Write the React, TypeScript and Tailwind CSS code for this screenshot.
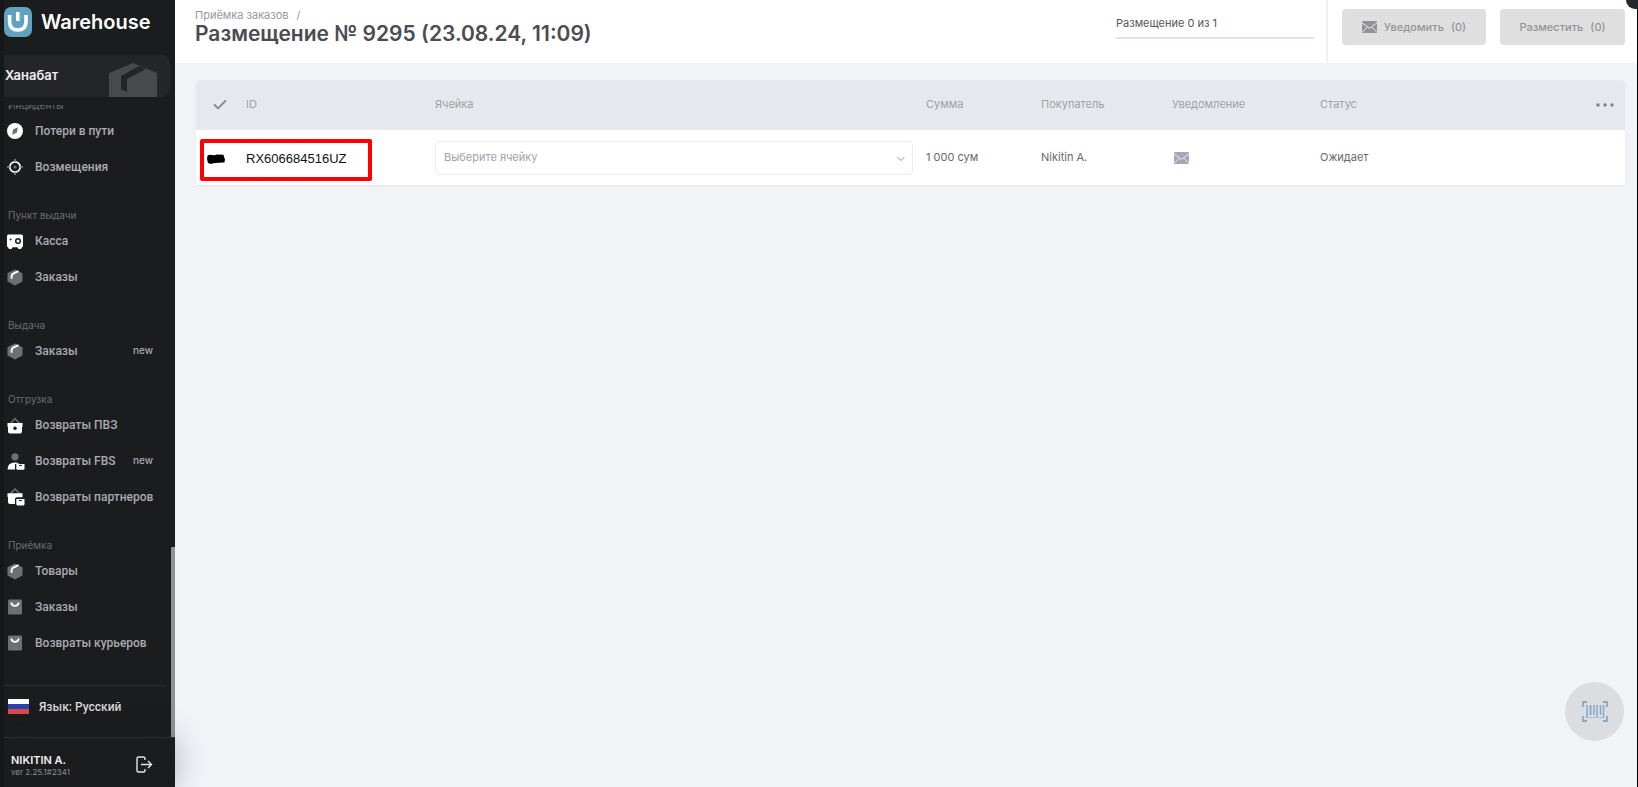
import React from "react";
import { Check, ChevronDown } from "lucide-react";

const BoxIcon = () => (
  <svg width="16" height="17" viewBox="0 0 16 17">
    <path d="M8 0.5L15.5 4.2V12.6L8 16.5L0.5 12.6V4.2Z" fill="#6f6f72" />
    <path d="M4.6 9.8V7.2Q4.6 5.4 6.2 4.6L11.5 2.2" fill="none" stroke="#fff" strokeWidth="1.9" />
  </svg>
);

const CompassIcon = () => (
  <svg width="16" height="16" viewBox="0 0 16 16">
    <circle cx="8" cy="8" r="8" fill="#fff" />
    <path d="M10.8 4.2L10 9.4L5.2 11.8L6 6.6Z" fill="#6f6f72" />
  </svg>
);

const TargetIcon = () => (
  <svg width="16" height="16" viewBox="0 0 16 16" fill="none">
    <circle cx="8" cy="8" r="5.2" stroke="#fff" strokeWidth="1.7" />
    <circle cx="8" cy="8" r="1.6" fill="#6f6f72" />
    <path d="M8 0V3M8 13V16M0 8H3M13 8H16" stroke="#8a8a8d" strokeWidth="1.6" />
  </svg>
);

const SafeIcon = () => (
  <svg width="16" height="15" viewBox="0 0 16 15">
    <path d="M1.5 0.5H14.5Q16 0.5 16 2V12Q16 13 15 13.2L14 15H11.5L10.5 13.3H5.5L4.5 15H2L1 13.2Q0 13 0 12V2Q0 0.5 1.5 0.5Z" fill="#fff" />
    <circle cx="11" cy="7" r="2.3" fill="#fff" stroke="#1b1c1d" strokeWidth="1.5" />
    <circle cx="3.6" cy="5.5" r="1" fill="#1b1c1d" />
  </svg>
);

const BasketIcon = () => (
  <svg width="16" height="17" viewBox="0 0 16 17">
    <path d="M3.5 6.5L8 1.5L12.5 6.5" fill="none" stroke="#6f6f72" strokeWidth="1.5" />
    <path d="M0.5 6H15.5V10H15V14.5Q15 16.5 13 16.5H3Q1 16.5 1 14.5V10H0.5Z" fill="#fff" />
    <circle cx="8" cy="11.2" r="1.7" fill="#1b1c1d" />
  </svg>
);

const PersonIcon = () => (
  <svg width="18" height="17" viewBox="0 0 18 17">
    <circle cx="8" cy="3.8" r="3.6" fill="#6f6f72" />
    <path d="M0.5 16.5Q0.5 9.5 8 9.5Q11 9.5 12.6 10.6L8 11V16.5Z" fill="#fff" />
    <path d="M9.3 11H17.5V15.5Q17.5 16.8 16.2 16.8H10.6Q9.3 16.8 9.3 15.5Z" fill="#fff" />
    <path d="M12 12.4H15" stroke="#1b1c1d" />
  </svg>
);

const PartnerIcon = () => (
  <svg width="18" height="18" viewBox="0 0 18 18">
    <path d="M3.5 5.5L8 1L12.5 5.5" fill="none" stroke="#6f6f72" strokeWidth="1.5" />
    <path d="M0.5 5.3H15.5V9.2H10Q8 9.2 8 11V16H3Q1 16 1 14V9H0.5Z" fill="#fff" />
    <path d="M9.3 11H17.5V16Q17.5 17.4 16.2 17.4H10.6Q9.3 17.4 9.3 16Z" fill="#fff" />
    <path d="M12 12.6H15" stroke="#1b1c1d" />
  </svg>
);

const BagIcon = () => (
  <svg width="16" height="16" viewBox="0 0 16 16">
    <rect x="1" y="0.5" width="14" height="15" rx="1.2" fill="#6f6f72" />
    <path d="M4.2 3.5Q4.8 6.8 8 6.8Q11.2 6.8 11.8 3.5" fill="none" stroke="#fff" strokeWidth="1.8" />
  </svg>
);

const MailIcon = () => (
  <svg width="15" height="12" viewBox="0 0 15 12">
    <rect width="15" height="12" rx="1" fill="currentColor" />
    <path d="M0 1.8L7.5 7.4L15 1.8M0.5 11L5.2 6.2M14.5 11L9.8 6.2" fill="none" stroke="#fff" strokeOpacity="0.8" />
  </svg>
);

const sections = [
  {
    title: "Инциденты",
    items: [
      { name: "Потери в пути", icon: <CompassIcon /> },
      { name: "Возмещения", icon: <TargetIcon /> },
    ],
  },
  {
    title: "Пункт выдачи",
    items: [
      { name: "Касса", icon: <SafeIcon /> },
      { name: "Заказы", icon: <BoxIcon /> },
    ],
  },
  {
    title: "Выдача",
    items: [{ name: "Заказы", icon: <BoxIcon />, isNew: true }],
  },
  {
    title: "Отгрузка",
    items: [
      { name: "Возвраты ПВЗ", icon: <BasketIcon /> },
      { name: "Возвраты FBS", icon: <PersonIcon />, isNew: true },
      { name: "Возвраты партнеров", icon: <PartnerIcon /> },
    ],
  },
  {
    title: "Приёмка",
    items: [
      { name: "Товары", icon: <BoxIcon /> },
      { name: "Заказы", icon: <BagIcon /> },
      { name: "Возвраты курьеров", icon: <BagIcon /> },
    ],
  },
];

function Sidebar() {
  return (
    <aside className="w-[175px] h-screen sticky top-0 shrink-0 flex flex-col bg-[#1b1c1d] border-l-4 border-[#161718]">
      <div className="flex items-center gap-[9px] h-[55px] pb-[11px]">
        <svg width="28" height="30" viewBox="0 0 28 30">
          <rect width="28" height="30" rx="7" fill="#5fa3bf" />
          <path d="M5.6 8V14.5Q5.6 23 13.8 23Q22 23 22 14.5V8" fill="none" stroke="#fff" strokeWidth="3.6" />
          <path d="M13.8 5V14" stroke="#fff" strokeWidth="3.6" />
        </svg>
        <span className="text-white text-xl font-semibold">Warehouse</span>
      </div>

      <div className="flex items-center justify-between h-[42px] mr-[5px] pl-px pr-[13px] rounded-r-lg bg-[#242528] shrink-0">
        <span className="text-[#eeeeef] text-[13px] font-semibold">Ханабат</span>
        <svg className="self-end" width="48" height="34" viewBox="0 0 48 34">
          <path d="M0 34V10L24 0L48 10V34Z" fill="#48494c" />
          <path d="M30 3L37 6L18 16V29L12 26V13Z" fill="#242528" />
        </svg>
      </div>

      <div className="flex-1 min-h-0 mt-2 flex overflow-hidden">
        <nav className="flex-1 min-w-0 pr-[5px]">
          <div className="-mt-[30px]">
            {sections.map((section) => (
              <div key={section.title} className="pt-[22px]">
                <h4 className="pl-1 text-[10px] leading-4 text-[#6c6d73]">{section.title}</h4>
                <ul>
                  {section.items.map((item) => (
                    <li key={item.name}>
                      <a
                        href="#"
                        className="flex items-center h-9 pl-[3px] pr-[13px] font-[Roboto,sans-serif] text-xs font-medium text-[#a9aab3]"
                      >
                        <span className="w-7 shrink-0">{item.icon}</span>
                        <span className="whitespace-nowrap">{item.name}</span>
                        {item.isNew && <span className="ml-auto font-[Inter,sans-serif] text-[10px]">new</span>}
                      </a>
                    </li>
                  ))}
                </ul>
              </div>
            ))}
          </div>
          <button className="flex items-center gap-[10px] w-full h-[42px] mt-6 pl-1 border-t border-[#2c2d30] font-[Roboto,sans-serif] text-xs font-medium text-[#d6d6da]">
            <svg width="21" height="15" viewBox="0 0 21 15">
              <rect width="21" height="5" fill="#fff" />
              <rect y="5" width="21" height="5" fill="#2745b0" />
              <rect y="10" width="21" height="5" fill="#dc4a48" />
            </svg>
            Язык: Русский
          </button>
        </nav>
        <div className="w-1 shrink-0 h-[190px] self-end bg-[#929295]"></div>
      </div>

      <div className="flex items-center justify-between h-[50px] pl-[7px] pr-[22px] pt-1 border-t border-[#2c2d30] bg-[#1b1c1d] shadow-[0_0_30px_rgba(24,32,70,0.3)] shrink-0">
        <div>
          <p className="text-[11px] leading-[14px] font-semibold text-[#f0f0f1]">NIKITIN A.</p>
          <p className="text-[8px] leading-[10px] text-[#8f9095]">ver 2.25.1#2341</p>
        </div>
        <button aria-label="Выйти">
          <svg width="17" height="17" viewBox="0 0 17 17" fill="none" stroke="#e4e4e6" strokeWidth="1.4">
            <path d="M9 4V2.5Q9 1 7.5 1H2.5Q1 1 1 2.5V14.5Q1 16 2.5 16H7.5Q9 16 9 14.5V13M5 8.5H15.5M12 5L15.5 8.5L12 12" />
          </svg>
        </button>
      </div>
    </aside>
  );
}

function Header() {
  return (
    <header className="flex h-[63px] bg-white">
      <div className="flex-1 pl-5 pt-2">
        <p className="text-[11px] leading-[14px] text-[#97989d]">
          <a href="#">Приёмка заказов</a>
          <span className="ml-2">/</span>
        </p>
        <h1 className="text-[21px] leading-6 font-semibold text-[#4b4c51]">Размещение № 9295 (23.08.24, 11:09)</h1>
      </div>
      <div className="pt-4 pr-3">
        <div className="w-[198px] h-[23px] border-b-2 border-[#dfe3ec] text-[11px] leading-[14px] text-[#55565b]">
          Размещение 0 из 1
        </div>
      </div>
      <div className="flex gap-[14px] pt-[9px] pl-[14px] pr-3 border-l-2 border-[#f1f2f6] text-[11px] font-medium text-[#929398]">
        <button disabled className="flex items-center justify-center gap-[7px] w-36 h-9 rounded bg-[#dfdfdf]">
          <MailIcon />
          <span>Уведомить</span>
          <span>(0)</span>
        </button>
        <button disabled className="flex items-center justify-center gap-[7px] w-[125px] h-9 rounded bg-[#dfdfdf]">
          <span>Разместить</span>
          <span>(0)</span>
        </button>
      </div>
    </header>
  );
}

function OrdersTable() {
  return (
    <table className="w-full table-fixed text-left text-[11px] rounded-t bg-white overflow-hidden shadow-[0_1px_2px_#e2e5ec]">
      <colgroup>
        <col className="w-[50px]" />
        <col className="w-[189px]" />
        <col />
        <col className="w-[115px]" />
        <col className="w-[131px]" />
        <col className="w-[148px]" />
        <col className="w-[205px]" />
        <col className="w-[100px]" />
      </colgroup>
      <thead>
        <tr className="h-[50px] bg-[#e7e8ed] text-[#a0a1a7]">
          <th className="pl-4">
            <Check size={16} strokeWidth={3} className="text-[#8c8d92]" />
          </th>
          <th className="pb-[2px] font-normal">ID</th>
          <th className="pb-[2px] font-normal">Ячейка</th>
          <th className="pb-[2px] font-normal">Сумма</th>
          <th className="pb-[2px] font-normal">Покупатель</th>
          <th className="pb-[2px] font-normal">Уведомление</th>
          <th className="pb-[2px] font-normal">Статус</th>
          <th className="pr-[11px]">
            <button aria-label="Ещё" className="block ml-auto">
              <svg width="18" height="4" viewBox="0 0 18 4" fill="#85868b">
                <circle cx="2" cy="2" r="1.8" />
                <circle cx="9" cy="2" r="1.8" />
                <circle cx="16" cy="2" r="1.8" />
              </svg>
            </button>
          </th>
        </tr>
      </thead>
      <tbody>
        <tr className="h-[55px] text-[#66676c]">
          <td colSpan={2}>
            <div className="flex items-center w-[172px] h-[42px] ml-1 mt-1 pb-[2px] pl-[3px] border-4 border-[#fe0000] rounded-xs">
              <svg width="18" height="10" viewBox="0 0 18 10">
                <path d="M2 0.8L8 1.3L9.5 0.5L16.5 0.8L17.3 4L18 5L17.5 8.6L12 8.8L6 9.2L4 10L1 9L0 5L0.4 2Z" fill="#000" />
              </svg>
              <span className="ml-[21px] font-['Liberation_Sans',sans-serif] text-[13px] text-[#111]">RX606684516UZ</span>
            </div>
          </td>
          <td className="pr-[13px]">
            <div className="relative">
              <select
                aria-label="Ячейка"
                className="block w-full h-[34px] pl-2 appearance-none rounded border border-[#ebecf0] bg-white text-[#a0a1a8]"
              >
                <option>Выберите ячейку</option>
              </select>
              <ChevronDown size={12} className="absolute right-[6px] top-3 pointer-events-none text-[#8c8f99]" />
            </div>
          </td>
          <td>1 000 сум</td>
          <td>Nikitin A.</td>
          <td className="pl-[2px] text-[#a4a8b6]">
            <MailIcon />
          </td>
          <td>Ожидает</td>
          <td></td>
        </tr>
      </tbody>
    </table>
  );
}

export default function App() {
  return (
    <div className="flex min-h-screen bg-[#f2f3f7] border-r border-black font-[Inter,sans-serif] overflow-x-clip">
      <Sidebar />
      <div className="flex-1 min-w-0">
        <Header />
        <main className="pt-[17px] pl-[21px] pr-3">
          <OrdersTable />
        </main>
      </div>

      <div className="absolute right-0 top-0 w-3 h-[9px] rounded-bl-full bg-[#24272d]"></div>

      <button
        aria-label="Сканировать"
        className="fixed right-[14px] bottom-[46px] w-[59px] h-[59px] rounded-full bg-[#dcdde0] flex items-center justify-center"
      >
        <svg width="26" height="21" viewBox="0 0 26 21" fill="none" stroke="#83aac8">
          <path d="M1 6V1H5M21 1H25V6M25 15V20H21M5 20H1V15" strokeWidth="1.8" />
          <path d="M5 4V17M12 4V14M15 4V17M18.5 4V14M21.5 4V17" strokeWidth="1.5" />
          <path d="M8.5 4V14" strokeWidth="2" />
          <path d="M7.5 16.5H9.5M11 16.5H13M17.5 16.5H19.5" strokeWidth="1.2" />
        </svg>
      </button>
    </div>
  );
}
